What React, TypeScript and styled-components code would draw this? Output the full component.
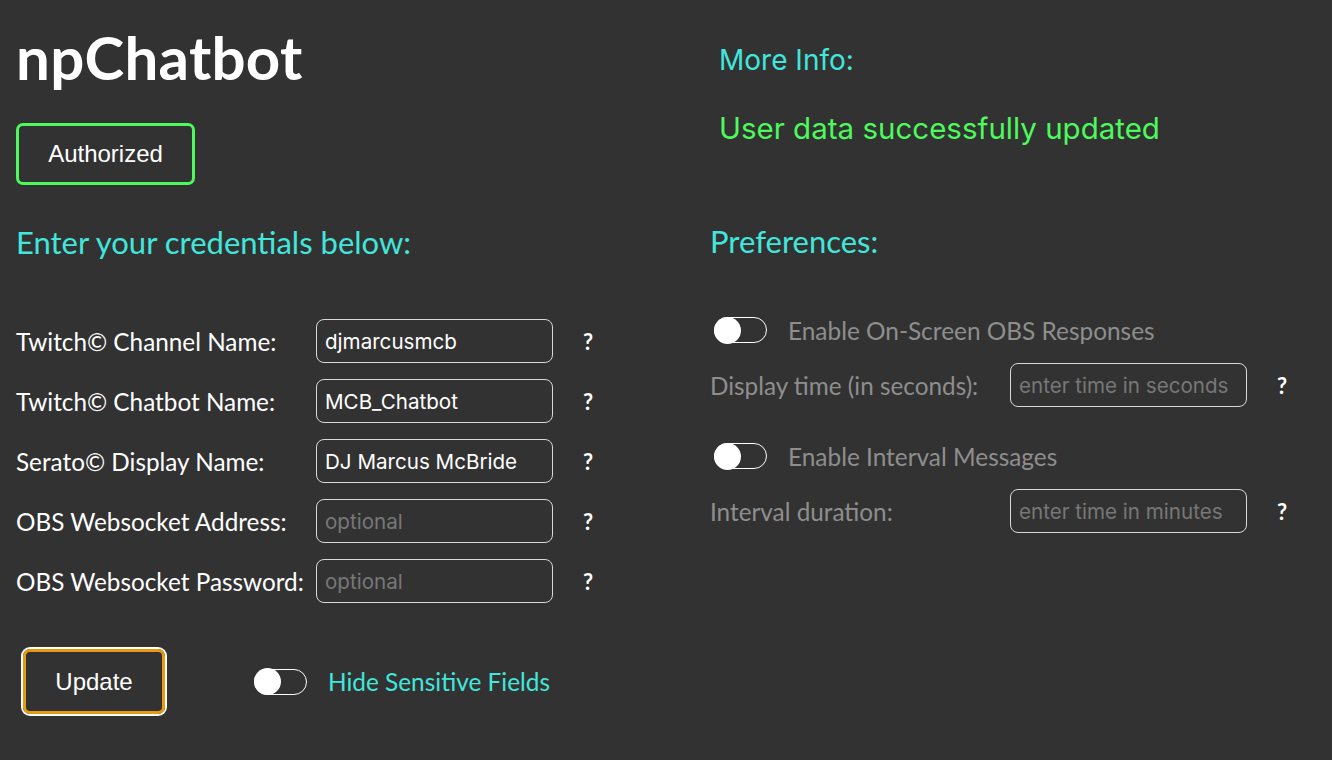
import React from 'react';
import styled, { createGlobalStyle } from 'styled-components';

const GlobalStyle = createGlobalStyle`
  html, body {
    margin: 0;
    padding: 0;
    background: #323232;
  }
  body {
    font-family: "Fira Sans", "Lato", "Noto Sans", sans-serif;
    color: #ffffff;
  }
`;

const CYAN = '#41e6dc';
const GREEN = '#4dfa5c';
const MUTED = '#8e8e8e';

const Page = styled.div`
  display: grid;
  grid-template-columns: 694px 1fr;
  padding: 0 16px;
  min-height: 760px;
  box-sizing: border-box;
`;

const Column = styled.div`
  display: flex;
  flex-direction: column;
  align-items: flex-start;
`;

const Title = styled.h1`
  margin: 25px 0 0;
  font-family: "Lato", sans-serif;
  font-weight: 700;
  font-size: 60px;
  line-height: 64px;
  letter-spacing: 0.3px;
`;

const PlainButton = styled.button<{ accent: string }>`
  background: transparent;
  color: #ffffff;
  font-family: "Liberation Sans", Arial, sans-serif;
  font-size: 24px;
  border: 3px solid ${p => p.accent};
  border-radius: 7px;
  cursor: pointer;
`;

const AuthButton = styled(PlainButton)`
  margin-top: 34px;
  width: 179px;
  height: 62px;
`;

const UpdateButton = styled(PlainButton)`
  width: 142px;
  height: 65px;
  margin-left: 7px;
  box-shadow: 0 0 0 2px #ffffff;
`;

const Heading = styled.h2<{ top: number }>`
  margin: ${p => p.top}px 0 0;
  font-family: "Lato", sans-serif;
  font-weight: 400;
  font-size: 31px;
  line-height: 40px;
  color: ${CYAN};
`;

const InfoText = styled.div<{ top: number; color: string; size: number }>`
  margin: ${p => p.top}px 0 0 9px;
  font-family: "Inter", sans-serif;
  font-size: ${p => p.size}px;
  line-height: 40px;
  color: ${p => p.color};
`;

const Rows = styled.div<{ top: number }>`
  display: flex;
  flex-direction: column;
  gap: 16px;
  margin-top: ${p => p.top}px;
`;

const Row = styled.div`
  display: grid;
  grid-template-columns: 270px 237px auto;
  column-gap: 30px;
  align-items: center;
  height: 44px;
`;

const Label = styled.label<{ muted?: boolean }>`
  font-family: "Lato", sans-serif;
  font-size: 24.3px;
  white-space: nowrap;
  color: ${p => (p.muted ? MUTED : '#ffffff')};
`;

const Field = styled.input`
  box-sizing: border-box;
  width: 237px;
  height: 44px;
  padding: 0 8px;
  background: transparent;
  border: 1px solid #d8d8d8;
  border-radius: 8px;
  color: #ffffff;
  font-family: "Inter", sans-serif;
  font-size: 20.6px;
  outline: none;
  &::placeholder {
    color: #777777;
  }
`;

const Help = styled.span`
  font-family: "Lato", sans-serif;
  font-weight: 700;
  font-size: 22px;
  color: #ffffff;
  cursor: help;
`;

const BottomRow = styled.div`
  display: flex;
  align-items: center;
  margin-top: 46px;
`;

const ToggleRow = styled.div<{ top: number; left?: number }>`
  display: flex;
  align-items: center;
  gap: 21px;
  height: 44px;
  margin: ${p => p.top}px 0 0 ${p => p.left ?? 0}px;
`;

const Track = styled.span`
  position: relative;
  display: inline-block;
  width: 53px;
  height: 26px;
  box-sizing: border-box;
  border: 1.5px solid #ffffff;
  border-radius: 13px;
  flex: none;
`;

const Knob = styled.span`
  position: absolute;
  left: -1px;
  top: -1.5px;
  width: 27px;
  height: 27px;
  border-radius: 50%;
  background: #ffffff;
`;

const ToggleLabel = styled.span<{ color: string }>`
  font-family: "Lato", sans-serif;
  font-size: 24.4px;
  color: ${p => p.color};
`;

const Toggle: React.FC = () => (
  <Track>
    <Knob />
  </Track>
);

const credentials = [
  { label: 'Twitch© Channel Name:', value: 'djmarcusmcb' },
  { label: 'Twitch© Chatbot Name:', value: 'MCB_Chatbot' },
  { label: 'Serato© Display Name:', value: 'DJ Marcus McBride' },
  { label: 'OBS Websocket Address:', value: '', placeholder: 'optional' },
  { label: 'OBS Websocket Password:', value: '', placeholder: 'optional' },
];

export default function App() {
  return (
    <>
      <GlobalStyle />
      <Page>
        <Column>
          <Title>npChatbot</Title>
          <AuthButton accent={GREEN}>Authorized</AuthButton>
          <Heading top={37}>Enter your credentials below:</Heading>
          <Rows top={57}>
            {credentials.map(c => (
              <Row key={c.label}>
                <Label>{c.label}</Label>
                <Field defaultValue={c.value} placeholder={c.placeholder} />
                <Help>?</Help>
              </Row>
            ))}
          </Rows>
          <BottomRow>
            <UpdateButton accent="#e69a14">Update</UpdateButton>
            <ToggleRow top={0} left={89}>
              <Toggle />
              <ToggleLabel color={CYAN}>Hide Sensitive Fields</ToggleLabel>
            </ToggleRow>
          </BottomRow>
        </Column>

        <Column>
          <InfoText top={40} color={CYAN} size={28}>More Info:</InfoText>
          <InfoText top={28} color={GREEN} size={29.5}>User data successfully updated</InfoText>
          <Heading top={73}>Preferences:</Heading>
          <ToggleRow top={47} left={4}>
            <Toggle />
            <ToggleLabel color={MUTED}>Enable On-Screen OBS Responses</ToggleLabel>
          </ToggleRow>
          <Rows top={11}>
            <Row>
              <Label muted>Display time (in seconds):</Label>
              <Field placeholder="enter time in seconds" />
              <Help>?</Help>
            </Row>
          </Rows>
          <ToggleRow top={27} left={4}>
            <Toggle />
            <ToggleLabel color={MUTED}>Enable Interval Messages</ToggleLabel>
          </ToggleRow>
          <Rows top={11}>
            <Row>
              <Label muted>Interval duration:</Label>
              <Field placeholder="enter time in minutes" />
              <Help>?</Help>
            </Row>
          </Rows>
        </Column>
      </Page>
    </>
  );
}
